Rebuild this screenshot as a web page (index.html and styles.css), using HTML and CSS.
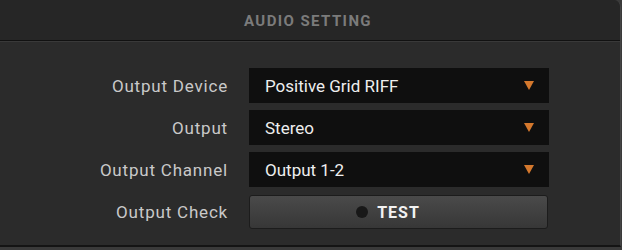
FILE: index.html
```html
<!DOCTYPE html>
<html>
<head>
<meta charset="utf-8">
<link rel="stylesheet" href="styles.css">
</head>
<body>
<div class="panel">
  <div class="header"><span class="title">AUDIO SETTING</span></div>
  <div class="content">
    <div class="form">
      <div class="label">Output Device</div>
      <div class="select"><span>Positive Grid RIFF</span><i class="caret"></i></div>
      <div class="label">Output</div>
      <div class="select"><span>Stereo</span><i class="caret"></i></div>
      <div class="label">Output Channel</div>
      <div class="select"><span>Output 1-2</span><i class="caret"></i></div>
      <div class="label">Output Check</div>
      <div class="button"><i class="dot"></i><span>TEST</span></div>
    </div>
  </div>
</div>
</body>
</html>
```
FILE: styles.css
```css
html, body {
  margin: 0;
  padding: 0;
  background: #3a3a3a;
  width: 622px;
  height: 250px;
  overflow: hidden;
  font-family: Roboto, "Liberation Sans", sans-serif;
}
.panel {
  width: 620px;
  height: 245px;
  background: #2b2b2b;
  border-right: 1px solid #454545;
  border-bottom: 2px solid #141414;
  border-top-right-radius: 7px;
  overflow: hidden;
}
.header {
  height: 40px;
  background: #262626;
  border-bottom: 1px solid #111111;
  display: flex;
  align-items: center;
  justify-content: center;
}
.title {
  color: #7b7b7b;
  font-weight: bold;
  font-size: 15px;
  letter-spacing: 1.4px;
  margin-right: 4px;
  margin-top: 1px;
}
.content {
  border-top: 1px solid #393939;
  padding-top: 26px;
}
.form {
  display: grid;
  grid-template-columns: 228px 300px;
  column-gap: 21px;
  row-gap: 7px;
}
.label {
  color: #c9c9c9;
  font-size: 17px;
  letter-spacing: 0.8px;
  display: flex;
  align-items: center;
  justify-content: flex-end;
  height: 35px;
}
.select {
  height: 35px;
  background: #0f0f0f;
  display: flex;
  align-items: center;
  justify-content: space-between;
  padding: 0 15px 0 16px;
  box-sizing: border-box;
  color: #eeeeee;
  font-size: 17px;
}
.caret {
  width: 0;
  height: 0;
  border-left: 5px solid transparent;
  border-right: 5px solid transparent;
  border-top: 9px solid #d4782d;
}
.button {
  height: 34px;
  width: 299px;
  box-sizing: border-box;
  border: 1px solid #1c1c1c;
  border-radius: 3px;
  background: linear-gradient(#4a4a4a, #373737);
  display: flex;
  align-items: center;
  justify-content: center;
  gap: 9px;
  padding-right: 21px;
  color: #f2f2f2;
  font-weight: bold;
  font-size: 16px;
  letter-spacing: 1px;
  margin-top: 1px;
}
.dot {
  width: 12px;
  height: 12px;
  border-radius: 50%;
  background: #181818;
}
```
